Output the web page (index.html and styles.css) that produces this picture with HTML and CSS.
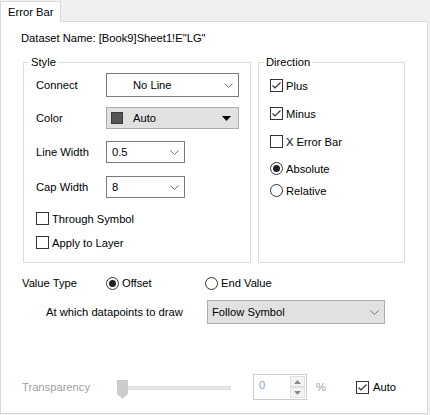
FILE: index.html
```html
<!DOCTYPE html>
<html>
<head>
<meta charset="utf-8">
<link rel="stylesheet" href="styles.css">
</head>
<body>
<div class="tabbar"><div class="tab">Error Bar</div></div>
<div class="panel">
  <div class="dataset">Dataset Name: [Book9]Sheet1!E"LG"</div>
  <div class="groups">
    <fieldset class="grp style">
      <legend>Style</legend>
      <div class="gbody">
        <div class="frow r1"><span class="lbl">Connect</span>
          <div class="sel white connect"><span class="txt nl">No Line</span><svg class="chev" width="9" height="5" viewBox="0 0 9 5"><polyline points="0.5,0.5 4.5,4.5 8.5,0.5" fill="none" stroke="#707070" stroke-width="1"/></svg></div>
        </div>
        <div class="frow r2"><span class="lbl">Color</span>
          <div class="sel gray color"><span class="swatch"></span><span class="txt">Auto</span><svg class="tri" width="9" height="5" viewBox="0 0 9 5"><polygon points="0,0 9,0 4.5,5" fill="#000"/></svg></div>
        </div>
        <div class="frow r3"><span class="lbl">Line Width</span>
          <div class="sel white small"><span class="txt">0.5</span><svg class="chev" width="9" height="5" viewBox="0 0 9 5"><polyline points="0.5,0.5 4.5,4.5 8.5,0.5" fill="none" stroke="#707070" stroke-width="1"/></svg></div>
        </div>
        <div class="frow r4"><span class="lbl">Cap Width</span>
          <div class="sel white small"><span class="txt">8</span><svg class="chev" width="9" height="5" viewBox="0 0 9 5"><polyline points="0.5,0.5 4.5,4.5 8.5,0.5" fill="none" stroke="#707070" stroke-width="1"/></svg></div>
        </div>
        <div class="crow c1"><span class="cb"></span><span>Through Symbol</span></div>
        <div class="crow c2"><span class="cb"></span><span>Apply to Layer</span></div>
      </div>
    </fieldset>
    <fieldset class="grp dir">
      <legend>Direction</legend>
      <div class="gbody">
        <div class="crow d1"><span class="cb"><svg width="11" height="11" viewBox="0 0 11 11"><polyline points="1.5,5.5 4,8 9.5,2.5" fill="none" stroke="#333" stroke-width="1.2"/></svg></span><span>Plus</span></div>
        <div class="crow d2"><span class="cb"><svg width="11" height="11" viewBox="0 0 11 11"><polyline points="1.5,5.5 4,8 9.5,2.5" fill="none" stroke="#333" stroke-width="1.2"/></svg></span><span>Minus</span></div>
        <div class="crow d3"><span class="cb"></span><span>X Error Bar</span></div>
        <div class="crow d4"><span class="rb on"></span><span>Absolute</span></div>
        <div class="crow d5"><span class="rb"></span><span>Relative</span></div>
      </div>
    </fieldset>
  </div>
  <div class="vtype">
    <span class="vlbl">Value Type</span>
    <span class="opt o1"><span class="rb on"></span><span>Offset</span></span>
    <span class="opt"><span class="rb"></span><span>End Value</span></span>
  </div>
  <div class="dpts">
    <span class="dlbl">At which datapoints to draw</span>
    <div class="sel gray follow"><span class="txt">Follow Symbol</span><svg class="chev" width="9" height="5" viewBox="0 0 9 5"><polyline points="0.5,0.5 4.5,4.5 8.5,0.5" fill="none" stroke="#707070" stroke-width="1"/></svg></div>
  </div>
  <div class="transp">
    <span class="tlbl">Transparency</span>
    <div class="slider">
      <svg width="114" height="20" viewBox="0 0 114 20">
        <rect x="11.5" y="6.5" width="102" height="3" fill="#e7e7e7" stroke="#dcdcdc"/>
        <polygon points="0,0 11,0 11,14 5.5,19 0,14" fill="#cccccc"/>
      </svg>
    </div>
    <div class="spin">
      <span class="sval">0</span>
      <div class="sbtns">
        <div class="sb"><svg width="7" height="4" viewBox="0 0 7 4"><polygon points="0,4 7,4 3.5,0" fill="#8a8a8a"/></svg></div>
        <div class="sb"><svg width="7" height="4" viewBox="0 0 7 4"><polygon points="0,0 7,0 3.5,4" fill="#8a8a8a"/></svg></div>
      </div>
    </div>
    <span class="pct">%</span>
    <span class="crow auto"><span class="cb"><svg width="11" height="11" viewBox="0 0 11 11"><polyline points="1.5,5.5 4,8 9.5,2.5" fill="none" stroke="#333" stroke-width="1.2"/></svg></span><span>Auto</span></span>
  </div>
</div>
</body>
</html>
```
FILE: styles.css
```css
* { box-sizing: border-box; }
body {
  margin: 0;
  background: #f0f0f0;
  font-family: "Liberation Sans", Arial, sans-serif;
  font-size: 11.2px;
  color: #000;
  width: 430px;
  height: 415px;
  overflow: hidden;
}
.tabbar { height: 21px; display: flex; }
.tab {
  position: relative;
  z-index: 1;
  margin-top: 1px;
  width: 61px;
  height: 21px;
  background: #fff;
  border: 1px solid #d9d9d9;
  border-bottom: none;
  padding: 2px 0 0 7px;
  line-height: 16px;
}
.panel {
  width: 428px;
  height: 393px;
  background: #fff;
  border: 1px solid #d9d9d9;
  padding: 8px 0 0 20px;
}
.dataset { line-height: 16px; height: 16px; }
.groups { display: flex; gap: 7px; margin-top: 8px; margin-left: 2px; }
.grp {
  margin: 0;
  padding: 0;
  border: 1px solid #dcdcdc;
  height: 209px;
  min-width: 0;
}
.grp.style { width: 228px; }
.grp.dir { width: 147px; }
legend { padding: 0 2px; margin-left: 5px; line-height: 16px; }
.style .gbody { padding-left: 12px; }
.dir .gbody { padding-left: 11px; }
.frow { display: flex; align-items: center; }
.lbl { width: 70px; }
.r1 { margin-top: 3px; height: 24px; }
.r2 { margin-top: 10px; height: 22px; }
.r3 { margin-top: 12px; height: 22px; }
.r4 { margin-top: 13px; height: 22px; }
.sel {
  display: flex;
  align-items: center;
  height: 100%;
}
.sel.white { background: #fff; border: 1px solid #7a7a7a; }
.sel.gray { background: #e1e1e1; border: 1px solid #adadad; }
.connect { width: 133px; padding-left: 26px; }
.color { width: 133px; padding-left: 4px; }
.small { width: 79px; padding-left: 5px; }
.sel .txt { flex: 1; }
.chev { margin-right: 5px; }
.tri { margin-right: 7px; }
.swatch {
  width: 12px; height: 12px;
  background: #555;
  border: 1px solid #3a3a3a;
  margin-right: 10px;
}
.crow { display: flex; align-items: center; height: 13px; gap: 3px; }
.cb {
  width: 13px; height: 13px;
  border: 1px solid #333;
  background: #fff;
  display: flex; align-items: center; justify-content: center;
  flex: none;
}
.rb {
  width: 13px; height: 13px;
  border: 1px solid #333;
  border-radius: 50%;
  background: #fff;
  display: flex; align-items: center; justify-content: center;
  flex: none;
}
.rb.on::after {
  content: "";
  width: 7px; height: 7px;
  border-radius: 50%;
  background: #222;
}
.c1 { margin-top: 14px; }
.c2 { margin-top: 11px; }
.d1 { margin-top: 9px; }
.d2 { margin-top: 15px; }
.d3 { margin-top: 15px; }
.d4 { margin-top: 14px; }
.d5 { margin-top: 9px; }
.vtype { display: flex; align-items: center; height: 16px; margin-top: 12px; margin-left: 1px; }
.vlbl { width: 84px; }
.opt { display: flex; align-items: center; gap: 3px; }
.o1 { width: 99px; }
.dpts { display: flex; align-items: center; height: 24px; margin-top: 9px; margin-left: 25px; }
.dlbl { width: 161px; }
.follow { width: 178px; padding-left: 4px; }
.transp { display: flex; align-items: center; height: 26px; margin-top: 50px; margin-left: 1px; }
.tlbl { width: 95px; color: #a0a0a0; }
.slider { width: 114px; height: 20px; margin-top: 6px; }
.slider svg { display: block; }
.spin {
  margin-left: 22px;
  width: 54px; height: 26px;
  border: 1px solid #cccccc;
  display: flex;
  background: #fff;
}
.sval { flex: 1; padding: 3px 0 0 5px; color: #8fa3c2; line-height: 14px; }
.sbtns { width: 16px; display: flex; flex-direction: column; padding: 1px 1px 1px 0; }
.sb {
  flex: 1;
  background: #f3f3f3;
  border: 1px solid #e0e0e0;
  display: flex; align-items: center; justify-content: center;
}
.pct { width: 40px; margin-left: 9px; color: #a0a0a0; }
.auto { gap: 4px; }
```
